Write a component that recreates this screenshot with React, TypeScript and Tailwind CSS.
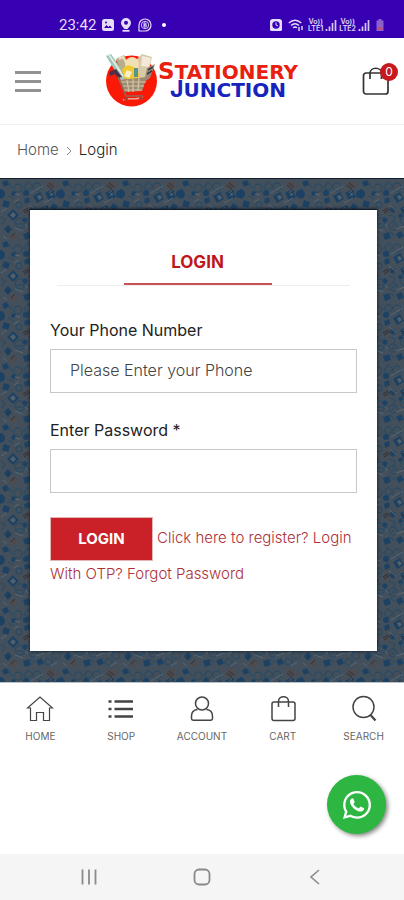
import { FaWhatsapp } from 'react-icons/fa'

const navItems = [
  {
    name: 'Home',
    icon: <path d="M1.500 13 14 2l12.500 11h-3v12.500h-6v-8h-7v8h-6V13z" strokeWidth="1.200" />,
  },
  {
    name: 'Shop',
    icon: (
      <>
        <path d="M1.500 6.500h3M1.500 14h3M1.500 21.500h3" strokeWidth="2.500" />
        <path d="M7.500 6.500H26M7.500 14H26M7.500 21.500H26" strokeWidth="2.300" />
      </>
    ),
  },
  {
    name: 'Account',
    icon: (
      <>
        <circle cx="14" cy="8.500" r="6.500" />
        <path d="M9.500 14.500C5.500 15 3.500 17.500 3.500 21v2.500c0 1 .8 1.700 1.700 1.700h17.600c1 0 1.700-.7 1.700-1.700V21c0-3.500-2-6-6-6.500" />
      </>
    ),
  },
  {
    name: 'Cart',
    icon: (
      <>
        <rect x="3" y="7" width="23" height="18.500" rx="2" />
        <path d="M9.500 12V6.500c0-6.500 10-6.500 10 0V12" />
      </>
    ),
  },
  {
    name: 'Search',
    icon: (
      <>
        <circle cx="13.500" cy="12" r="10.500" />
        <path d="m20.500 20 5 5.500" strokeWidth="2.200" />
      </>
    ),
  },
]

const Signal = () => (
  <svg className="h-3 w-3" viewBox="0 0 12 12" fill="none" stroke="#d5c8f0" strokeWidth="1.700">
    <path d="M1.500 12v-2M4.500 12V7.500M7.500 12V4M10.500 12V1" />
  </svg>
)

const Lte = ({ line }: { line: string }) => (
  <span className="flex flex-col text-center text-[7px] leading-[7px] font-bold text-[#d5c8f0]">
    <span>Vo))</span>
    <span>LTE{line}</span>
  </span>
)

const StatusBar = () => (
  <div className="flex h-[38px] items-end justify-between bg-[#3700b3] pr-5 pb-1.5 pl-[59px] text-[#e6ddf8]">
    <div className="flex items-center gap-1.5">
      <span className="font-[Roboto] text-[15px] leading-[14px]">23:42</span>
      <svg className="h-3 w-3" viewBox="0 0 12 12">
        <rect width="12" height="12" rx="2.500" fill="currentColor" />
        <path d="m2 9 2.500-3 2 2L8 6.500 10 9z" fill="#3700b3" />
        <circle cx="4" cy="3.500" r="1" fill="#3700b3" />
      </svg>
      <svg className="h-3.5 w-3" viewBox="0 0 12 14">
        <path d="M6 0a5 5 0 0 0-5 5c0 2.500 2.500 4.500 3.500 6h3C8.500 9.500 11 7.500 11 5a5 5 0 0 0-5-5z" fill="currentColor" />
        <path d="M2.500 12.800h7" stroke="currentColor" strokeWidth="1.800" />
        <circle cx="6" cy="4.800" r="2" fill="#3700b3" />
      </svg>
      <svg className="h-3.5 w-3.5" viewBox="0 0 14 14" fill="none" stroke="currentColor">
        <path d="M1 13V7a6 6 0 1 1 6 6z" strokeWidth="1.200" />
        <circle cx="7" cy="7" r="3.700" strokeWidth=".9" />
        <path d="M6 4.800v4.400M6 5h1.200a1 1 0 0 1 0 2H6h1.500a1 1 0 0 1 0 2H6" />
      </svg>
      <span className="ml-1 h-1 w-1 rounded-full bg-white" />
    </div>
    <div className="flex items-center gap-0.5">
      <svg className="mr-1 h-3 w-3" viewBox="0 0 12 12">
        <path d="M0 1.500 2 0h8l2 1.500V11l-1 1H1l-1-1z" fill="currentColor" />
        <circle cx="6" cy="6" r="3.700" fill="#3700b3" />
        <path d="M6 3.500V6l2 1" stroke="#e6ddf8" fill="none" />
      </svg>
      <svg className="mr-0.5 h-3 w-4" viewBox="0 0 16 12" fill="none" stroke="currentColor" strokeWidth="1.400">
        <path d="M.8 4c4-3.500 8.500-3.500 12.500 0M3 6.500c2.500-2.200 5.500-2.200 8 0M5 8.700c1.300-1 2.700-1 4 0" />
        <path d="M11 8v4M14 7v4" />
      </svg>
      <Lte line="1" />
      <Signal />
      <Lte line="2" />
      <Signal />
      <svg className="ml-1 h-3 w-2" viewBox="0 0 8 12">
        <path d="M2.500 0h3v1.500H7.500V12H.5V1.500h2z" fill="#8b62c9" />
        <path d="M1.500 8h5v3h-5z" fill="#b5527d" />
      </svg>
    </div>
  </div>
)

const Logo = () => (
  <a href="#home" aria-label="Stationery Junction" className="flex items-center">
    <svg className="h-14 w-[53px]" viewBox="0 0 53 56">
      <circle cx="26.500" cy="28" r="25.500" fill="#fa1906" />
      <path d="m1 3 5-2 16 23-5 5z" fill="#9fc5b8" />
      <path d="m4 2 15 22" stroke="#e8f2e4" strokeWidth="1.500" />
      <path d="m4 19 7-3 6 8-4 1-3-4-5 2z" fill="#4d304c" />
      <path d="m11 6 8-4 11 20-9 7z" fill="#b8ae8c" />
      <path d="m14 6 4-2 8 14" stroke="#ebe2bc" strokeWidth="2" fill="none" />
      <path d="m30 8 7-7 10 3-5 21-12 3z" fill="#d8c9a9" />
      <path d="m37 3 9 2-2 9-8-1z" fill="#f4e8da" />
      <path d="m42 15 8-4-5 14-6 4z" fill="#9b8a75" />
      <path d="m43 17 5-3M42 21l5-3" stroke="#343e43" strokeWidth="1.500" />
      <circle cx="27" cy="11" r="7" fill="#f3dfb4" />
      <path d="m17 16 6-4 8 3 4 8-6 5-10-3z" fill="#f2c92e" />
      <path d="m22 17 5 2-3 6-5-2z" fill="#f6efd0" />
      <path d="M29 15h4v9h-4z" fill="#59958f" />
      <path d="m15 27 27-3-5 14-17 1z" fill="#9a8b72" />
      <path d="M16 29h25M18 33h21M19 37h18M22 27l2 12M28 26v13M34 25l-1 13" stroke="#d8c4a4" strokeWidth="1.200" />
      <path d="m13 24 8 19h17" fill="none" stroke="#8a6a5a" strokeWidth="1.500" />
      <path d="M18 47c7-3 12 1 20-3" stroke="#f3a38d" strokeWidth="1.500" fill="none" />
      <circle cx="21" cy="46" r="2" fill="#b53b2c" />
      <circle cx="36" cy="45" r="2" fill="#b53b2c" />
    </svg>
    <span className="flex flex-col items-center font-['DejaVu_Sans'] text-xl leading-[17px] font-bold">
      <span className="text-[#e82010]">
        <span className="text-[23px]">S</span>TATIONERY
      </span>
      <span className="text-[#1723bd]">
        <span className="font-[Inter] text-[23px]">J</span>UNCTION
      </span>
    </span>
  </a>
)

const Header = () => (
  <header className="flex h-[87px] items-center justify-between border-b border-[#f1f1f1] pr-3.5 pl-[15px]">
    <button type="button" aria-label="Menu" className="flex w-[26px] flex-col gap-[6px]">
      <span className="h-[3px] bg-[#929292]" />
      <span className="h-[3px] bg-[#929292]" />
      <span className="h-[3px] bg-[#929292]" />
    </button>
    <Logo />
    <button type="button" aria-label="Cart, 0 items" className="relative">
      <svg className="h-7 w-7" viewBox="0 0 28 28" fill="none" stroke="#333" strokeWidth="1.700">
        <rect x="1.500" y="6" width="24.500" height="21" rx="2.500" />
        <path d="M8 12V6.500C8-.5 19.500-.5 19.500 6.500V12" />
      </svg>
      <span className="absolute -top-1 -right-2 h-[18px] w-[18px] rounded-full bg-[#c5191d] text-center text-xs leading-[18px] text-white">
        0
      </span>
    </button>
  </header>
)

// Repeating stationery doodles behind the login card
const Backdrop = () => (
  <svg aria-hidden="true" className="absolute inset-0 h-full w-full">
    <defs>
      <pattern id="doodles" width="60" height="61" patternUnits="userSpaceOnUse">
        <rect width="60" height="61" fill="#434f5a" />
        <g fill="none" stroke="#2b4a62" strokeWidth="1.300">
          <circle cx="18" cy="9" r="4" />
          <circle cx="20" cy="44" r="5" />
          <circle cx="33" cy="47" r="4" />
          <circle cx="45" cy="41" r="4.500" />
          <circle cx="37" cy="8" r="4" />
          <circle cx="19" cy="26" r="3" />
          <circle cx="56" cy="49" r="4" />
          <path d="m28 3 5 4-5 5-4-4zM47 52l6 3-3 5-6-3zM1 38l4 3-3 5M29 36l6 2-2 6M8 17l6 3M42 13l-6 5M52 35l6 4-4 4M30 53l5 4M16 45h8M43 40l5 3M35 45l-4 4M8 3l4 6" />
        </g>
        <g fill="#1d4162">
          <circle cx="0" cy="15" r="5" />
          <circle cx="60" cy="15" r="4" />
          <circle cx="26" cy="14" r="3" />
          <path d="m13 30 6 6-6 6-6-6zM8 46l4 4-4 5-4-5zM4 21l6 2-2 6-6-2z" />
          <path d="m33 17 7-4 4 7-7 4zM45 14l7-4 4 8-7 4zM23 55l6-2 2 6-6 2zM36 55l5-3 3 5-5 3z" />
          <path d="m24 20 5-2 1 5-5 2zM40 29l7-3 3 6-7 3zM53 24l5 3-3 5-5-3zM31 27l5 2-2 5-5-2zM24 38l4 2-2 4-4-2zM2 3l5-2 2 5-5 2zM38 36l4-2 1 4-4 1zM12 12l4 1-1 4-4-1z" />
        </g>
        <g fill="#50606c">
          <path d="m13 33 3 3-3 3-3-3zM37 17l3-1 2 3-3 2zM49 13l3-1 1 4-2 1zM43 29l3-1 1 2-3 1z" />
        </g>
        <g fill="#4e4a4d">
          <path d="m45 5 7-4 5 6-7 5zM9 57l4-4 5 4-5 5zM22 31l5-4 4 4-5 5z" />
        </g>
        <g fill="none" stroke="#24313e">
          <path d="m47 6 5 4M49 4l5 4M11 58l4-4M23 32l5-3M24 34l6-4M48 27l-6 5M54 12l-5 3M9 50l-2 3" />
        </g>
        <g fill="none" stroke="#596772">
          <path d="m31 14 12-7M44 24l9-5M1 33l6-4M14 23l5-3M15 49l8 3M36 50l9-3M36 31l-7-5M52 46l-5 2M20 16l-5-1M57 56l-7 4M3 57l4 3M28 48l-3-3" />
        </g>
      </pattern>
    </defs>
    <rect width="100%" height="100%" fill="url(#doodles)" />
  </svg>
)

const LoginCard = () => (
  <div className="relative border-t border-[#111c2c] bg-white px-5 pt-10 pb-16 shadow-[0_0_3px_#07101f]">
    <div role="tablist" className="mx-[7px] flex justify-center border-b border-[#eee] pr-3">
      <button
        type="button"
        role="tab"
        aria-selected="true"
        className="h-[35px] w-[148px] border-b-2 border-[#c65255] pb-2 text-[17px] font-bold text-[#bd171b]"
      >
        LOGIN
      </button>
    </div>
    <form className="pt-8">
      <label htmlFor="phone" className="block text-base leading-6 text-[#222]">
        Your Phone Number
      </label>
      <input
        id="phone"
        type="tel"
        placeholder="Please Enter your Phone"
        className="mt-[7px] h-11 w-full border border-[#c8c8c8] px-[19px] pb-0.5 text-base font-light text-[#444] outline-none placeholder:text-[#444]"
      />
      <label htmlFor="password" className="mt-[25px] block text-base leading-6 text-[#222]">
        Enter Password *
      </label>
      <input
        id="password"
        type="password"
        className="mt-[7px] h-11 w-full border border-[#c8c8c8] px-[19px] pb-0.5 text-base font-light text-[#444] outline-none"
      />
      <div className="mt-6 text-[15px] leading-[26px] font-light text-[#ad3038]">
        <button
          type="submit"
          className="mr-1 h-11 w-[103px] border border-[#e3b5b5] bg-[#c92127] align-middle text-[15px] font-bold text-white"
        >
          LOGIN
        </button>
        <a href="#register">Click here to register?</a> <a href="#otp">Login With OTP?</a>{' '}
        <a href="#forgot">Forgot Password</a>
      </div>
    </form>
  </div>
)

const BottomNav = () => (
  <nav className="grid grid-cols-5 border-t border-[#b9c1c7] pt-3">
    {navItems.map((item) => (
      <a key={item.name} href={`#${item.name.toLowerCase()}`} className="flex flex-col items-center gap-1.5">
        <svg className="h-7 w-7" viewBox="0 0 28 28" fill="none" stroke="#444" strokeWidth="1.500">
          {item.icon}
        </svg>
        <span className="text-[10px] leading-[14px] text-[#666] uppercase">{item.name}</span>
      </a>
    ))}
  </nav>
)

const SystemBar = () => (
  <div className="grid h-[46px] grid-cols-3 items-center justify-items-center bg-[#f5f5f5] px-8 text-[#8a8a8a]">
    <button type="button" aria-label="Recents">
      <svg className="h-4 w-4" viewBox="0 0 16 16" stroke="currentColor" strokeWidth="1.800">
        <path d="M1.500.5v15M8 .5v15M14.500.5v15" />
      </svg>
    </button>
    <button type="button" aria-label="Home">
      <svg className="h-[18px] w-[18px]" viewBox="0 0 18 18" fill="none" stroke="currentColor" strokeWidth="1.800">
        <rect x="1.500" y="1.500" width="15" height="15" rx="4.500" />
      </svg>
    </button>
    <button type="button" aria-label="Back">
      <svg className="h-4 w-4" viewBox="0 0 16 16" fill="none" stroke="currentColor" strokeWidth="1.600">
        <path d="m12 1-8 7 8 7" />
      </svg>
    </button>
  </div>
)

const App = () => {
  return (
    <div className="flex min-h-screen flex-col bg-white font-[Inter,sans-serif]">
      <StatusBar />
      <Header />
      <nav aria-label="Breadcrumb" className="flex h-[53px] items-center gap-1.5 px-[17px] pb-0.5 text-[15px]">
        <a href="#home" className="font-light text-[#555]">
          Home
        </a>
        <svg className="h-2.5 w-2" viewBox="0 0 8 10" fill="none" stroke="#888">
          <path d="m2 1 4 4-4 4" />
        </svg>
        <span className="font-light text-[#222]">Login</span>
      </nav>
      <main className="relative border-t border-[#111c2c] pt-[30px] pr-[27px] pb-[31px] pl-[30px]">
        <Backdrop />
        <LoginCard />
      </main>
      <BottomNav />
      <div className="flex-1" />
      <SystemBar />
      <a
        href="#whatsapp"
        aria-label="Chat on WhatsApp"
        className="fixed right-[18px] bottom-[66px] flex h-[59px] w-[59px] items-center justify-center rounded-full bg-[#2db742] text-white shadow-[2px_2px_4px_#888]"
      >
        <FaWhatsapp className="h-8 w-8" />
      </a>
    </div>
  )
}

export default App
